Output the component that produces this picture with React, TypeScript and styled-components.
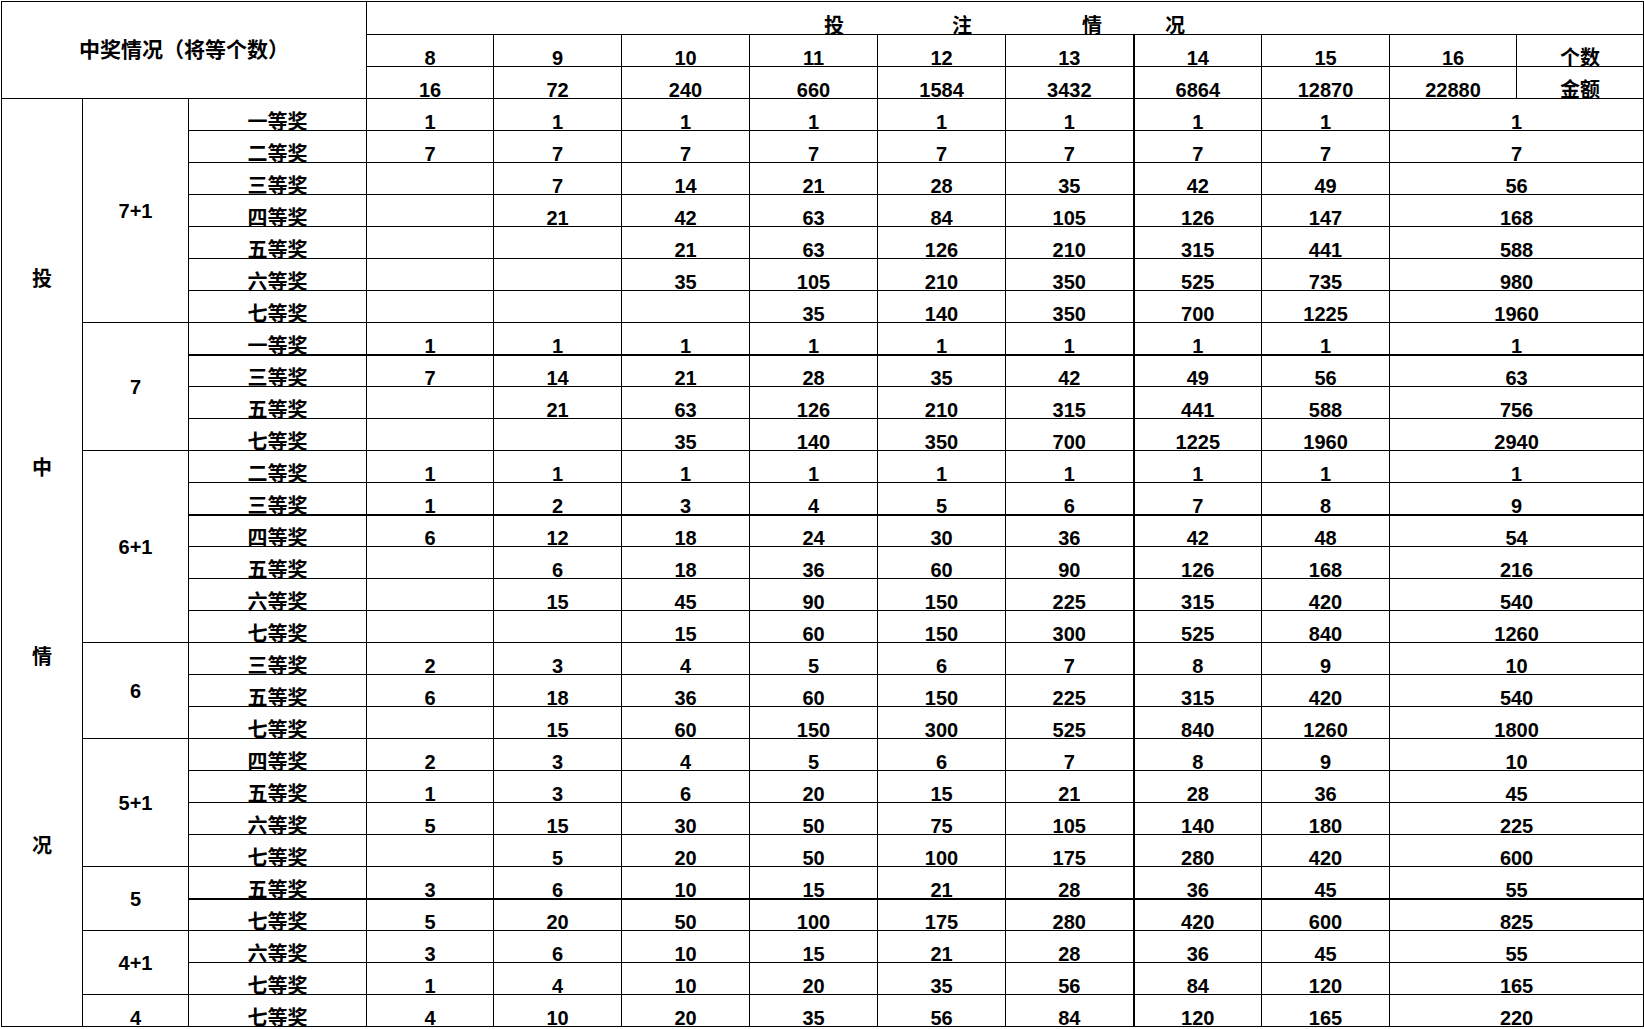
import React from 'react';
import styled, { createGlobalStyle } from 'styled-components';

const Global = createGlobalStyle`
  html, body { margin: 0; padding: 0; background: #fff; }
  body { width: 1644px; height: 1029px; overflow: hidden; }
`;

const Page = styled.div`
  padding: 1px 0 0 1px;
`;

const Sheet = styled.table`
  border-collapse: collapse;
  table-layout: fixed;
  width: 1642px;
  font-family: "Liberation Sans", "Noto Sans CJK SC", sans-serif;
  font-weight: 700;
  font-size: 20px;
  color: #000;
`;

const Col = styled.col<{ $w: number }>`
  width: ${p => p.$w}px;
`;

const Row = styled.tr<{ $h: number }>`
  height: ${p => p.$h}px;
`;

const Cell = styled.td<{ $v?: 'middle' | 'bottom'; $thickTop?: boolean; $thickLeft?: boolean }>`
  border: 1px solid #000;
  ${p => (p.$thickTop ? 'border-top-width: 2px;' : '')}
  ${p => (p.$thickLeft ? 'border-left-width: 2px;' : '')}
  padding: 0;
  text-align: center;
  vertical-align: ${p => p.$v ?? 'bottom'};
  line-height: ${p => (p.$v === 'middle' ? '20px' : '16px')};
  white-space: nowrap;
  overflow: visible;
`;

const TitleText = styled.span`
  font-size: 21px;
`;

const Spread = styled.div`
  display: flex;
  align-items: flex-end;
`;

const HeadChar = styled.span<{ $ml: number }>`
  margin-left: ${p => p.$ml}px;
`;

const VerticalLabel = styled.div`
  height: 926px;
  display: flex;
  flex-direction: column;
  justify-content: space-evenly;
  align-items: center;
`;

const widths = [81, 106, 178, 127, 128, 128, 128, 128, 128, 128, 128, 127, 127];
const counts = ['8', '9', '10', '11', '12', '13', '14', '15', '16'];
const amounts = ['16', '72', '240', '660', '1584', '3432', '6864', '12870', '22880'];

type R = [string, (number | '')[]];
type G = { label: string; rows: R[] };

const groups: G[] = [
  {
    label: '7+1',
    rows: [
      ['一等奖', [1, 1, 1, 1, 1, 1, 1, 1, 1]],
      ['二等奖', [7, 7, 7, 7, 7, 7, 7, 7, 7]],
      ['三等奖', ['', 7, 14, 21, 28, 35, 42, 49, 56]],
      ['四等奖', ['', 21, 42, 63, 84, 105, 126, 147, 168]],
      ['五等奖', ['', '', 21, 63, 126, 210, 315, 441, 588]],
      ['六等奖', ['', '', 35, 105, 210, 350, 525, 735, 980]],
      ['七等奖', ['', '', '', 35, 140, 350, 700, 1225, 1960]],
    ],
  },
  {
    label: '7',
    rows: [
      ['一等奖', [1, 1, 1, 1, 1, 1, 1, 1, 1]],
      ['三等奖', [7, 14, 21, 28, 35, 42, 49, 56, 63]],
      ['五等奖', ['', 21, 63, 126, 210, 315, 441, 588, 756]],
      ['七等奖', ['', '', 35, 140, 350, 700, 1225, 1960, 2940]],
    ],
  },
  {
    label: '6+1',
    rows: [
      ['二等奖', [1, 1, 1, 1, 1, 1, 1, 1, 1]],
      ['三等奖', [1, 2, 3, 4, 5, 6, 7, 8, 9]],
      ['四等奖', [6, 12, 18, 24, 30, 36, 42, 48, 54]],
      ['五等奖', ['', 6, 18, 36, 60, 90, 126, 168, 216]],
      ['六等奖', ['', 15, 45, 90, 150, 225, 315, 420, 540]],
      ['七等奖', ['', '', 15, 60, 150, 300, 525, 840, 1260]],
    ],
  },
  {
    label: '6',
    rows: [
      ['三等奖', [2, 3, 4, 5, 6, 7, 8, 9, 10]],
      ['五等奖', [6, 18, 36, 60, 150, 225, 315, 420, 540]],
      ['七等奖', ['', 15, 60, 150, 300, 525, 840, 1260, 1800]],
    ],
  },
  {
    label: '5+1',
    rows: [
      ['四等奖', [2, 3, 4, 5, 6, 7, 8, 9, 10]],
      ['五等奖', [1, 3, 6, 20, 15, 21, 28, 36, 45]],
      ['六等奖', [5, 15, 30, 50, 75, 105, 140, 180, 225]],
      ['七等奖', ['', 5, 20, 50, 100, 175, 280, 420, 600]],
    ],
  },
  {
    label: '5',
    rows: [
      ['五等奖', [3, 6, 10, 15, 21, 28, 36, 45, 55]],
      ['七等奖', [5, 20, 50, 100, 175, 280, 420, 600, 825]],
    ],
  },
  {
    label: '4+1',
    rows: [
      ['六等奖', [3, 6, 10, 15, 21, 28, 36, 45, 55]],
      ['七等奖', [1, 4, 10, 20, 35, 56, 84, 120, 165]],
    ],
  },
  {
    label: '4',
    rows: [['七等奖', [4, 10, 20, 35, 56, 84, 120, 165, 220]]],
  },
];

const thickRows = new Set([8, 13, 25]);
const totalRows = groups.reduce((n, g) => n + g.rows.length, 0);

export default function App() {
  let idx = 0;
  const body: React.ReactNode[] = [];
  groups.forEach((g, gi) => {
    g.rows.forEach((r, ri) => {
      const i = idx++;
      const thick = thickRows.has(i);
      const vals = r[1];
      body.push(
        <Row $h={32} key={`${gi}-${ri}`}>
          {i === 0 && (
            <Cell rowSpan={totalRows} $v="middle">
              <VerticalLabel>
                <span>投</span>
                <span>中</span>
                <span>情</span>
                <span>况</span>
              </VerticalLabel>
            </Cell>
          )}
          {ri === 0 && (
            <Cell rowSpan={g.rows.length} $v={g.rows.length > 1 ? 'middle' : 'bottom'}>
              {g.label}
            </Cell>
          )}
          <Cell $thickTop={thick}>{r[0]}</Cell>
          {vals.map((v, vi) => (
            <Cell
              key={vi}
              colSpan={vi === 8 ? 2 : 1}
              $thickTop={thick}
              $thickLeft={vi === 6}
            >
              {v}
            </Cell>
          ))}
        </Row>
      );
    });
  });

  return (
    <Page>
      <Global />
      <Sheet>
        <colgroup>
          {widths.map((w, i) => (
            <Col key={i} $w={w} />
          ))}
        </colgroup>
        <tbody>
          <Row $h={33}>
            <Cell colSpan={3} rowSpan={3} $v="middle">
              <TitleText>中奖情况（将等个数）</TitleText>
            </Cell>
            <Cell colSpan={10}>
              <Spread>
                <HeadChar $ml={457}>投</HeadChar>
                <HeadChar $ml={108}>注</HeadChar>
                <HeadChar $ml={110}>情</HeadChar>
                <HeadChar $ml={63}>况</HeadChar>
              </Spread>
            </Cell>
          </Row>
          <Row $h={32}>
            {counts.map((c, i) => (
              <Cell key={c} $thickLeft={i === 6}>
                {c}
              </Cell>
            ))}
            <Cell>个数</Cell>
          </Row>
          <Row $h={32}>
            {amounts.map((a, i) => (
              <Cell key={a} $thickLeft={i === 6}>
                {a}
              </Cell>
            ))}
            <Cell>金额</Cell>
          </Row>
          {body}
        </tbody>
      </Sheet>
    </Page>
  );
}
